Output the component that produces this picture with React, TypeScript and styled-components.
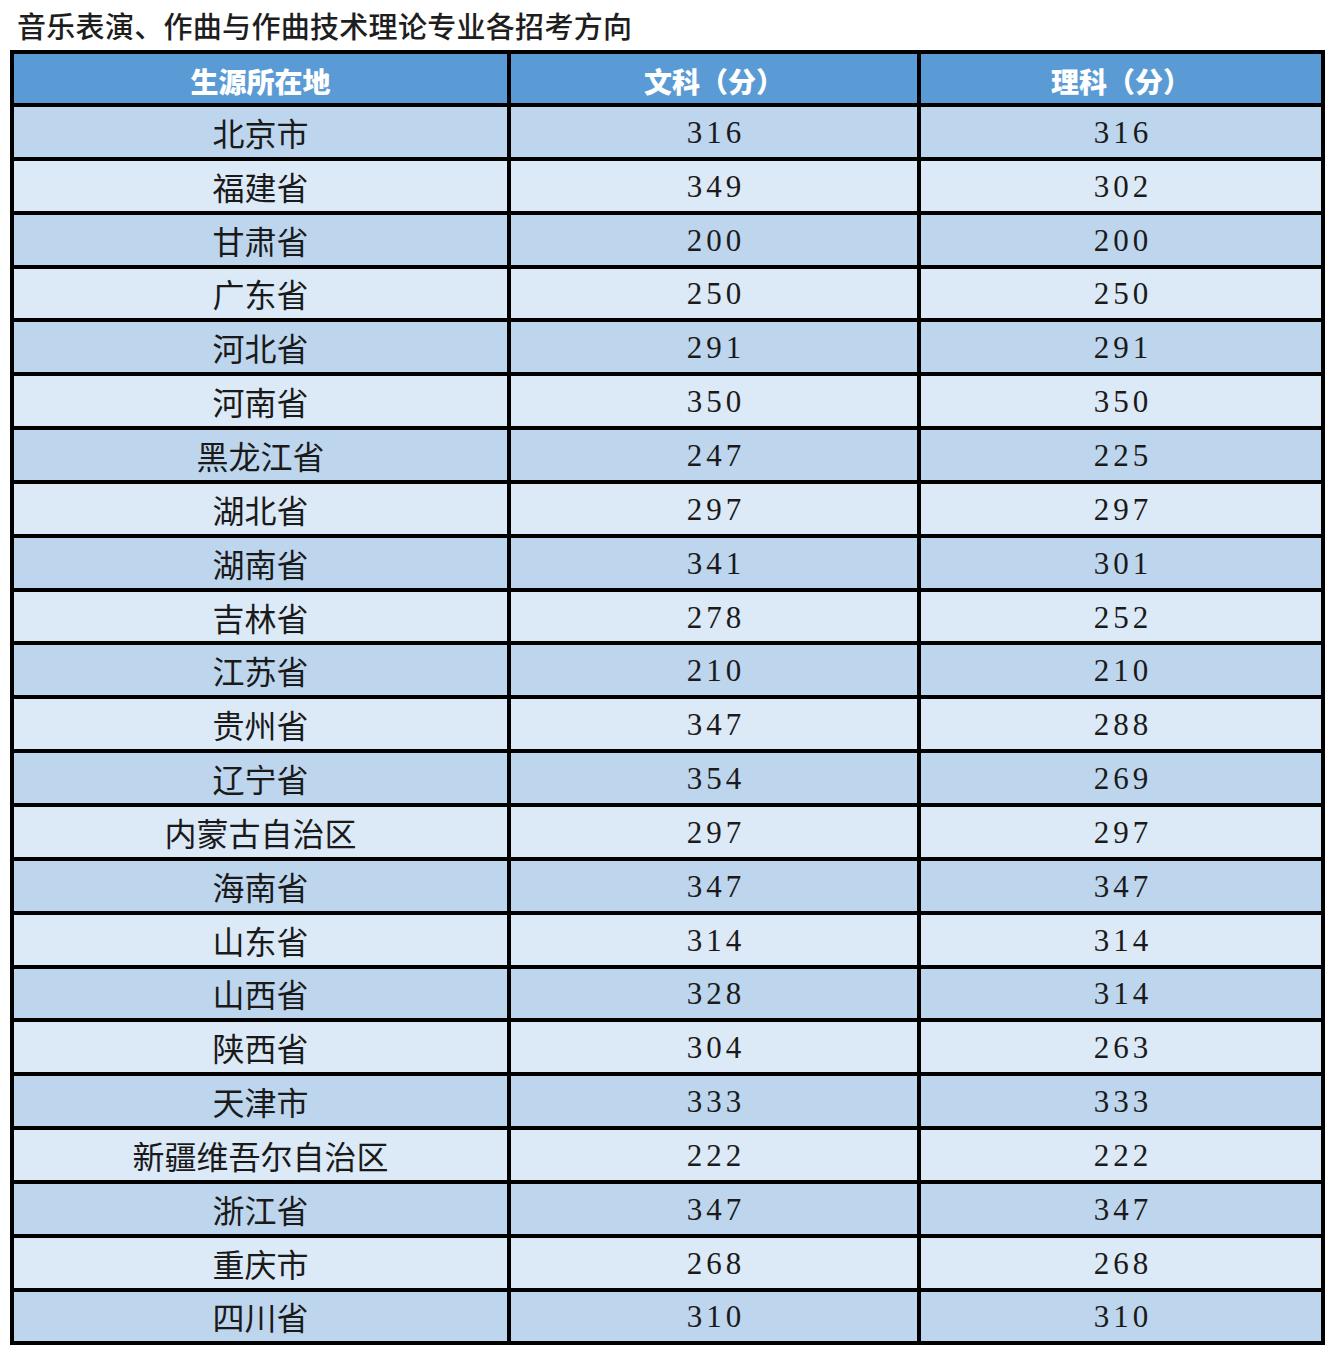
import styled, { createGlobalStyle } from "styled-components";

const GlobalStyle = createGlobalStyle`
    html, body {
        margin: 0;
        padding: 0;
        background: #ffffff;
    }
    body {
        font-family: "Noto Sans CJK SC", "Noto Sans", sans-serif;
    }
`

const Page = styled.div`
    width: 1336px;
    padding-bottom: 6px;
`

const Title = styled.h1`
    margin: 0;
    height: 50px;
    padding-left: 17px;
    display: flex;
    align-items: center;
    font-family: "Noto Sans CJK SC", sans-serif;
    font-size: 29px;
    font-weight: 500;
    color: #1e1e1e;
    letter-spacing: 0.3px;
`

const Table = styled.div`
    margin-left: 10px;
    width: 1315px;
    box-sizing: border-box;
    background: #000;
    padding: 4px;
    display: flex;
    flex-direction: column;
    gap: 4px;
`

const Row = styled.div<{ $tone: "head" | "dark" | "light" }>`
    display: grid;
    grid-template-columns: 493px 406px 400px;
    gap: 4px;
    height: ${(p) => (p.$tone === "head" ? "49px" : "49.85px")};

    & > div {
        background: ${(p) =>
            p.$tone === "head" ? "#5b9bd5" : p.$tone === "dark" ? "#bdd5ed" : "#dce9f6"};
    }
`

const HeadCell = styled.div`
    display: flex;
    align-items: center;
    justify-content: center;
    color: #ffffff;
    font-family: "Noto Sans CJK SC", sans-serif;
    font-size: 28px;
    font-weight: 900;
    padding-top: 4px;
`

const NameCell = styled.div`
    display: flex;
    align-items: center;
    justify-content: center;
    font-family: "Noto Sans CJK SC", sans-serif;
    font-size: 32px;
    color: #1a1a1a;
    padding-top: 0px;
`

const ScoreCell = styled.div`
    display: flex;
    align-items: center;
    justify-content: center;
    font-family: "Liberation Serif", "Times New Roman", serif;
    font-size: 31px;
    letter-spacing: 4px;
    text-indent: 4px;
    color: #1a1a1a;
    padding-top: 2px;
`

type Entry = {
    region: string;
    arts: number;
    science: number;
}

const entries: Entry[] = [
    { region: "北京市", arts: 316, science: 316 },
    { region: "福建省", arts: 349, science: 302 },
    { region: "甘肃省", arts: 200, science: 200 },
    { region: "广东省", arts: 250, science: 250 },
    { region: "河北省", arts: 291, science: 291 },
    { region: "河南省", arts: 350, science: 350 },
    { region: "黑龙江省", arts: 247, science: 225 },
    { region: "湖北省", arts: 297, science: 297 },
    { region: "湖南省", arts: 341, science: 301 },
    { region: "吉林省", arts: 278, science: 252 },
    { region: "江苏省", arts: 210, science: 210 },
    { region: "贵州省", arts: 347, science: 288 },
    { region: "辽宁省", arts: 354, science: 269 },
    { region: "内蒙古自治区", arts: 297, science: 297 },
    { region: "海南省", arts: 347, science: 347 },
    { region: "山东省", arts: 314, science: 314 },
    { region: "山西省", arts: 328, science: 314 },
    { region: "陕西省", arts: 304, science: 263 },
    { region: "天津市", arts: 333, science: 333 },
    { region: "新疆维吾尔自治区", arts: 222, science: 222 },
    { region: "浙江省", arts: 347, science: 347 },
    { region: "重庆市", arts: 268, science: 268 },
    { region: "四川省", arts: 310, science: 310 },
]

export default function App() {
    return (
        <>
            <GlobalStyle />
            <Page>
                <Title>音乐表演、作曲与作曲技术理论专业各招考方向</Title>
                <Table>
                    <Row $tone="head">
                        <HeadCell>生源所在地</HeadCell>
                        <HeadCell>文科（分）</HeadCell>
                        <HeadCell>理科（分）</HeadCell>
                    </Row>
                    {entries.map((entry, index) => (
                        <Row key={entry.region} $tone={index % 2 === 0 ? "dark" : "light"}>
                            <NameCell>{entry.region}</NameCell>
                            <ScoreCell>{entry.arts}</ScoreCell>
                            <ScoreCell>{entry.science}</ScoreCell>
                        </Row>
                    ))}
                </Table>
            </Page>
        </>
    )
}
